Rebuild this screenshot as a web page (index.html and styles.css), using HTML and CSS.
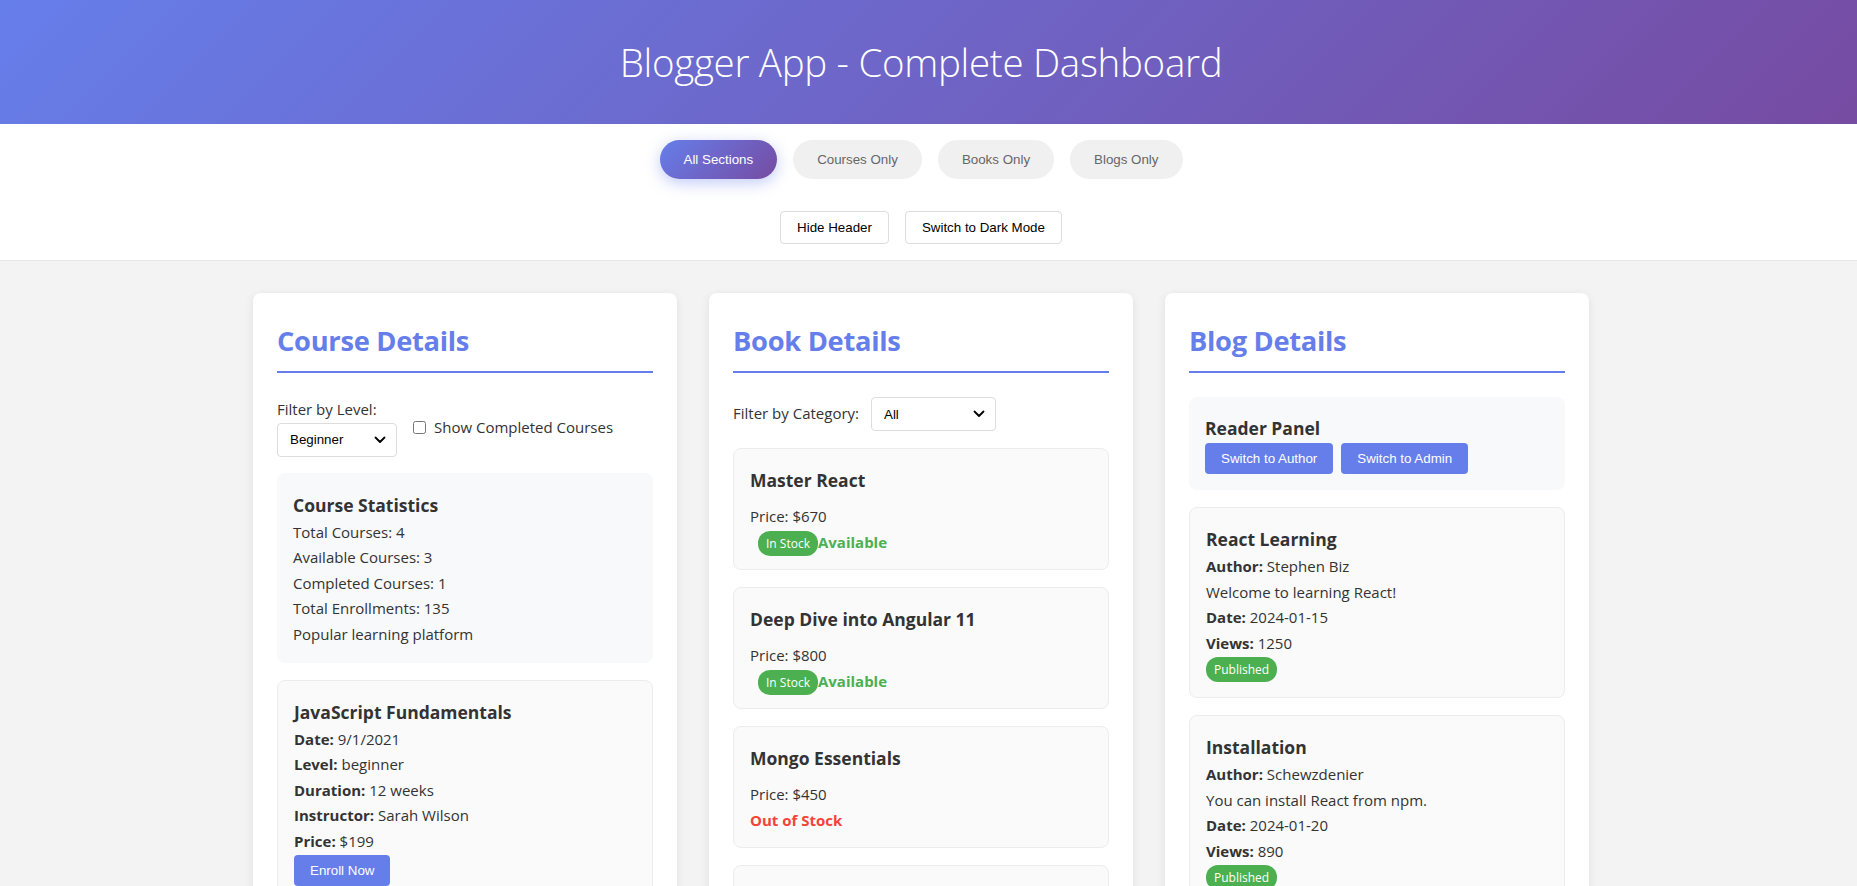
FILE: index.html
```html
<!DOCTYPE html>
<html lang="en">
<head>
<meta charset="utf-8">
<title>Blogger App - Complete Dashboard</title>
<link rel="stylesheet" href="styles.css">
</head>
<body>
<header class="app-header">
  <h1>Blogger App - Complete Dashboard</h1>
</header>
<nav class="toolbar">
  <div class="tabs">
    <button class="tab active">All Sections</button>
    <button class="tab">Courses Only</button>
    <button class="tab">Books Only</button>
    <button class="tab">Blogs Only</button>
  </div>
  <div class="actions">
    <button class="plain-btn">Hide Header</button>
    <button class="plain-btn">Switch to Dark Mode</button>
  </div>
</nav>
<div class="content">
<main class="dashboard">
  <section class="panel">
    <h2 class="panel-title">Course Details</h2>
    <div class="course-filters">
      <div class="filter-col">
        <label class="filter-label">Filter by Level:</label>
        <select class="select level-select"><option>Beginner</option><option>Intermediate</option><option>Advanced</option></select>
      </div>
      <label class="check-label"><input type="checkbox" class="check"> Show Completed Courses</label>
    </div>
    <div class="stats">
      <h3 class="item-title">Course Statistics</h3>
      <p class="line">Total Courses: 4</p>
      <p class="line">Available Courses: 3</p>
      <p class="line">Completed Courses: 1</p>
      <p class="line">Total Enrollments: 135</p>
      <p class="line">Popular learning platform</p>
    </div>
    <div class="item">
      <h3 class="item-title">JavaScript Fundamentals</h3>
      <p class="line"><strong>Date:</strong> 9/1/2021</p>
      <p class="line"><strong>Level:</strong> beginner</p>
      <p class="line"><strong>Duration:</strong> 12 weeks</p>
      <p class="line"><strong>Instructor:</strong> Sarah Wilson</p>
      <p class="line"><strong>Price:</strong> $199</p>
      <button class="primary-btn">Enroll Now</button>
    </div>
    <div class="item">
      <h3 class="item-title">React Essentials</h3>
      <p class="line"><strong>Date:</strong> 10/15/2021</p>
      <p class="line"><strong>Level:</strong> beginner</p>
    </div>
  </section>

  <section class="panel">
    <h2 class="panel-title">Book Details</h2>
    <div class="book-filter">
      <label class="filter-label">Filter by Category:</label>
      <select class="select category-select"><option>All</option><option>Programming</option><option>Database</option></select>
    </div>
    <div class="item book">
      <h3 class="item-title book-title">Master React</h3>
      <p class="line">Price: $670</p>
      <p class="line"><span class="badge stock-badge">In Stock</span><span class="available">Available</span></p>
    </div>
    <div class="item book">
      <h3 class="item-title book-title">Deep Dive into Angular 11</h3>
      <p class="line">Price: $800</p>
      <p class="line"><span class="badge stock-badge">In Stock</span><span class="available">Available</span></p>
    </div>
    <div class="item book">
      <h3 class="item-title book-title">Mongo Essentials</h3>
      <p class="line">Price: $450</p>
      <p class="line"><span class="unavailable">Out of Stock</span></p>
    </div>
    <div class="item book">
      <h3 class="item-title book-title">Node.js in Action</h3>
      <p class="line">Price: $520</p>
    </div>
  </section>

  <section class="panel">
    <h2 class="panel-title">Blog Details</h2>
    <div class="reader">
      <h3 class="item-title">Reader Panel</h3>
      <div class="reader-actions">
        <button class="primary-btn">Switch to Author</button>
        <button class="primary-btn">Switch to Admin</button>
      </div>
    </div>
    <div class="item blog">
      <h3 class="item-title">React Learning</h3>
      <p class="line"><strong>Author:</strong> Stephen Biz</p>
      <p class="line">Welcome to learning React!</p>
      <p class="line"><strong>Date:</strong> 2024-01-15</p>
      <p class="line"><strong>Views:</strong> 1250</p>
      <div class="line"><span class="badge">Published</span></div>
    </div>
    <div class="item blog">
      <h3 class="item-title">Installation</h3>
      <p class="line"><strong>Author:</strong> Schewzdenier</p>
      <p class="line">You can install React from npm.</p>
      <p class="line"><strong>Date:</strong> 2024-01-20</p>
      <p class="line"><strong>Views:</strong> 890</p>
      <div class="line"><span class="badge">Published</span></div>
    </div>
  </section>
</main>
</div>
</body>
</html>
```
FILE: styles.css
```css
* { box-sizing: border-box; }

body {
  margin: 0;
  font-family: "Open Sans", "Noto Sans", sans-serif;
  font-size: 15px;
  line-height: 25.6px;
  color: #333;
  background: #f3f3f3;
}

.app-header {
  background: linear-gradient(135deg, #667eea 0%, #764ba2 100%);
  color: #fff;
  height: 124px;
  padding-right: 15px;
  display: flex;
  align-items: center;
  justify-content: center;
}

.app-header h1 {
  margin: 0;
  font-weight: 300;
  font-size: 38.5px;
  line-height: 50px;
  letter-spacing: -0.3px;
}

.toolbar {
  background: #fff;
  border-bottom: 1px solid #e6e6e6;
  padding: 16px 15px 16px 0;
}

.tabs {
  display: flex;
  justify-content: center;
  gap: 16px;
  margin-bottom: 32px;
}

.tab {
  font-family: "Liberation Sans", Arial, sans-serif;
  font-size: 13.33px;
  line-height: 15px;
  padding: 12px 24px;
  border: none;
  border-radius: 25px;
  background: #f0f0f0;
  color: #666;
}

.tab.active {
  background: linear-gradient(135deg, #667eea 0%, #764ba2 100%);
  color: #fff;
  box-shadow: 0 4px 15px rgba(102, 126, 234, 0.4);
}

.actions {
  display: flex;
  justify-content: center;
  gap: 16px;
}

.plain-btn {
  font-family: "Liberation Sans", Arial, sans-serif;
  font-size: 13.33px;
  line-height: 15px;
  padding: 8px 16px;
  background: #fff;
  color: #000;
  border: 1px solid #ddd;
  border-radius: 4px;
}

.content {
  padding-right: 15px;
}

.dashboard {
  max-width: 1400px;
  margin: 0 auto;
  padding: 32px;
  display: grid;
  grid-template-columns: repeat(3, 1fr);
  gap: 32px;
  align-items: start;
}

.panel {
  background: #fff;
  border-radius: 8px;
  padding: 24px;
  box-shadow: 0 2px 10px rgba(0, 0, 0, 0.08);
}

.panel-title {
  margin: 0 0 24px;
  color: #667eea;
  font-size: 27.3px;
  line-height: 42px;
  font-weight: 700;
  padding-top: 3px;
  padding-bottom: 9px;
  border-bottom: 2px solid #667eea;
  letter-spacing: -0.3px;
}

.course-filters {
  display: flex;
  align-items: center;
  gap: 16px;
}

.filter-col {
  display: flex;
  flex-direction: column;
  align-items: flex-start;
}

.select {
  appearance: none;
  -webkit-appearance: none;
  font-family: "Liberation Sans", Arial, sans-serif;
  font-size: 13.33px;
  padding: 8px 28px 8px 12px;
  height: 34px;
  border: 1px solid #ddd;
  border-radius: 4px;
  color: #000;
  background: #fff url("data:image/svg+xml,%3Csvg xmlns='http://www.w3.org/2000/svg' width='12' height='8' viewBox='0 0 12 8'%3E%3Cpath d='M1.5 1.5 L6 6 L10.5 1.5' fill='none' stroke='%23000' stroke-width='1.8' stroke-linecap='round' stroke-linejoin='round'/%3E%3C/svg%3E") no-repeat right 10px center;
}

.level-select { width: 120px; }
.category-select { width: 125px; }

.check-label {
  display: flex;
  align-items: center;
  gap: 8px;
  padding-top: 2px;
}

.check {
  margin: 0;
  width: 13px;
  height: 13px;
}

.book-filter {
  display: flex;
  align-items: center;
  gap: 12px;
  margin-bottom: 17px;
}

.stats {
  background: #f8f9fa;
  border-radius: 8px;
  padding: 17px 16px 15px;
  margin: 16px 0 17px;
}

.item-title {
  margin: 0;
  font-size: 17.5px;
  line-height: 30px;
  font-weight: 700;
}

.line { margin: 0; }

.item {
  background: #fafafa;
  border: 1px solid #ececec;
  border-radius: 8px;
  padding: 16px;
  margin-bottom: 17px;
}

.item.book { padding-bottom: 13px; }
.item.blog { padding-bottom: 14px; }

.book-title { margin-bottom: 9px; }

.primary-btn {
  font-family: "Liberation Sans", Arial, sans-serif;
  font-size: 13.33px;
  line-height: 15px;
  padding: 8px 16px;
  background: #667eea;
  color: #fff;
  border: none;
  border-radius: 4px;
}

.reader {
  background: #f8f9fa;
  border-radius: 8px;
  padding: 16px;
  margin-bottom: 17px;
}

.reader-actions {
  display: flex;
  gap: 8px;
}

.badge {
  background: #4caf50;
  color: #fff;
  font-size: 12px;
  padding: 4px 8px;
  border-radius: 12px;
}

.stock-badge { margin-left: 8px; }

.available {
  color: #4caf50;
  font-weight: 700;
}

.unavailable {
  color: #f44336;
  font-weight: 700;
}
```
